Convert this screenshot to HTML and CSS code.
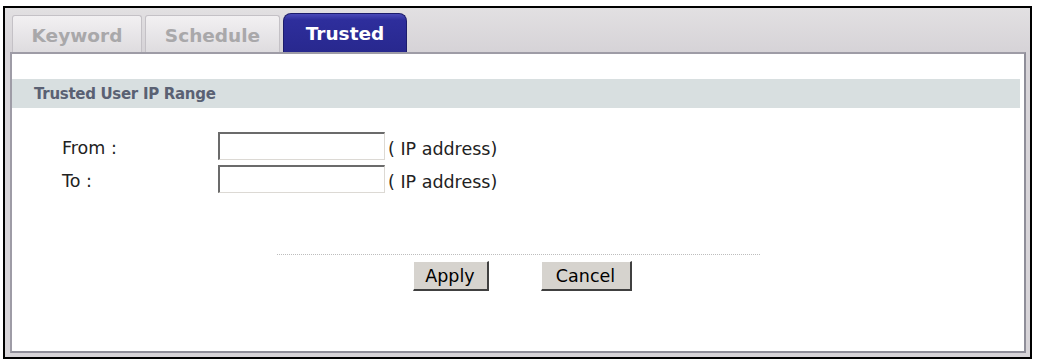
FILE: index.html
```html
<!DOCTYPE html>
<html>
<head>
<meta charset="utf-8">
<link rel="stylesheet" href="styles.css">
</head>
<body>
<div class="frame">
  <div class="tabs">
    <div class="tab">Keyword</div>
    <div class="tab tab-wide">Schedule</div>
    <div class="tab active">Trusted</div>
  </div>
  <div class="panel">
    <div class="section">Trusted User IP Range</div>
    <div class="form">
      <div class="row">
        <span class="label">From :</span>
        <input class="ip" type="text">
        <span class="hint">( IP address)</span>
      </div>
      <div class="row">
        <span class="label">To :</span>
        <input class="ip" type="text">
        <span class="hint">( IP address)</span>
      </div>
    </div>
    <div class="sep"></div>
    <div class="buttons">
      <button class="btn btn-apply">Apply</button>
      <button class="btn btn-cancel">Cancel</button>
    </div>
  </div>
</div>
</body>
</html>
```

FILE: styles.css
```css
html, body {
  margin: 0;
  padding: 0;
  background: #ffffff;
}

body {
  font-family: "DejaVu Sans", Verdana, sans-serif;
}

.frame {
  margin: 6px 0 0 3px;
  width: 1025px;
  height: 349px;
  border: 2px solid #000000;
  background: #d7d4d8;
  display: flex;
  flex-direction: column;
}

.tabs {
  height: 44px;
  display: flex;
  align-items: flex-end;
  gap: 3px;
  padding-left: 7px;
  background: linear-gradient(#e2e0e2, #d6d3d7);
}

.tab {
  box-sizing: border-box;
  width: 130px;
  height: 37px;
  border: 1px solid #c4c1c6;
  border-bottom: none;
  border-radius: 3px 3px 0 0;
  background: linear-gradient(#f2f0f2, #dedcdf);
  color: #a9a8aa;
  font-weight: bold;
  font-size: 18.5px;
  display: flex;
  align-items: center;
  justify-content: center;
  padding-top: 2px;
}

.tab-wide {
  width: 135px;
}

.tab.active {
  width: 124px;
  height: 39px;
  border: 1px solid #1c1c6c;
  border-bottom: none;
  border-radius: 8px 8px 0 0;
  background: linear-gradient(#4a4ab8 0px, #2e2e9c 6px, #28288e 100%);
  color: #ffffff;
  padding-top: 0;
}

.panel {
  box-sizing: border-box;
  margin: 0 4px 4px 5px;
  flex: 1;
  background: #ffffff;
  border-top: 2px solid #9e9ca6;
  border-left: 2px solid #9e9ca6;
  border-right: 2px solid #8f8e99;
  border-bottom: 2px solid #8f8e99;
  display: flex;
  flex-direction: column;
}

.section {
  margin: 25px 4px 0 0;
  height: 29px;
  background: #d8dfe0;
  color: #5a6173;
  font-weight: bold;
  font-size: 15px;
  letter-spacing: -0.3px;
  line-height: 30px;
  padding-left: 22px;
}

.form {
  margin-top: 24px;
  display: flex;
  flex-direction: column;
  gap: 5px;
  padding-left: 50px;
}

.row {
  display: flex;
  align-items: center;
  height: 28px;
}

.label {
  width: 156px;
  font-size: 17.5px;
  color: #222222;
  margin-top: 4px;
}

.ip {
  box-sizing: border-box;
  width: 167px;
  height: 28px;
  margin: 0;
  padding: 0;
  background: #ffffff;
  border-top: 2px solid #6b6b6b;
  border-left: 2px solid #6b6b6b;
  border-right: 1px solid #dcd9d4;
  border-bottom: 1px solid #dcd9d4;
  outline: none;
}

.hint {
  margin-left: 3px;
  margin-top: 6px;
  font-size: 17.5px;
  color: #222222;
}

.sep {
  align-self: center;
  width: 483px;
  margin-top: 61px;
  border-top: 1px dotted #bdbdbd;
}

.buttons {
  margin-top: 6px;
  display: flex;
  justify-content: center;
  gap: 52px;
  padding-left: 8px;
}

.btn {
  box-sizing: border-box;
  height: 30px;
  margin: 0;
  padding: 0;
  background: #d6d3ce;
  border-top: 1px solid #ffffff;
  border-left: 1px solid #ffffff;
  border-right: 2px solid #404040;
  border-bottom: 2px solid #404040;
  font-family: "DejaVu Sans", Verdana, sans-serif;
  font-size: 17.5px;
  color: #000000;
}

.btn-apply {
  width: 76px;
}

.btn-cancel {
  width: 91px;
}
```
